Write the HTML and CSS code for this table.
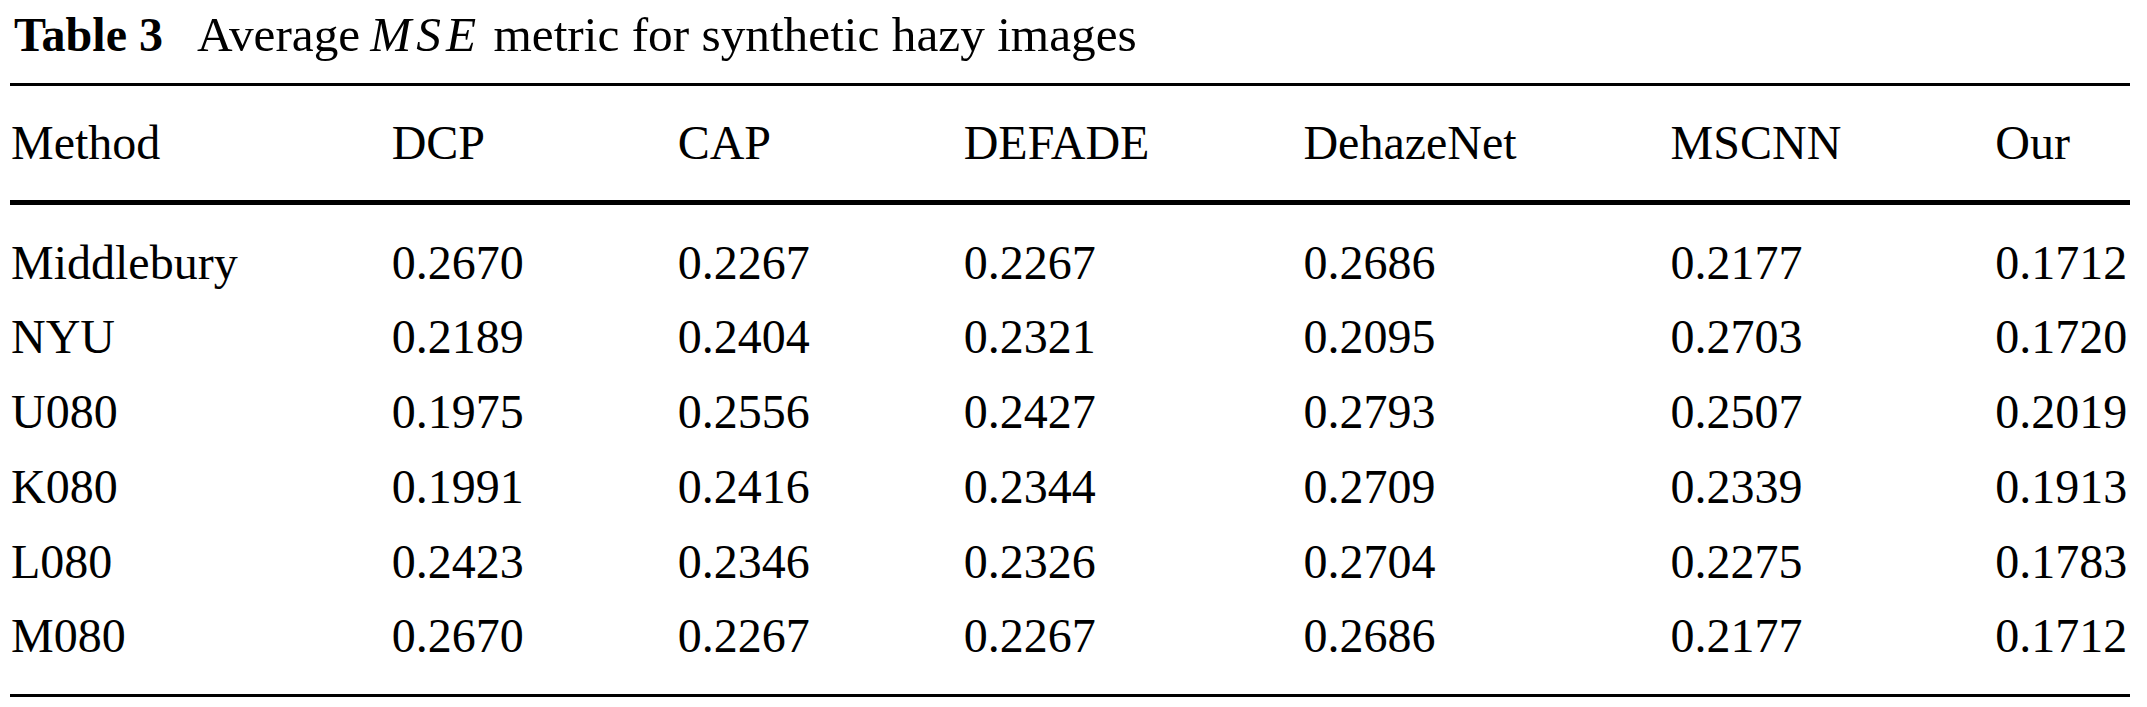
FILE: index.html
```html
<!DOCTYPE html>
<html lang="en">
<head>
<meta charset="utf-8">
<title>Table 3</title>
<link rel="stylesheet" href="styles.css">
</head>
<body>
<div class="page">
  <p class="caption"><b class="label">Table 3</b><span class="text">Average<i class="math">MSE</i> metric for synthetic hazy images</span></p>
  <table class="data">
    <thead>
      <tr><th>Method</th><th>DCP</th><th>CAP</th><th>DEFADE</th><th>DehazeNet</th><th>MSCNN</th><th>Our</th></tr>
    </thead>
    <tbody>
      <tr><td>Middlebury</td><td>0.2670</td><td>0.2267</td><td>0.2267</td><td>0.2686</td><td>0.2177</td><td>0.1712</td></tr>
      <tr><td>NYU</td><td>0.2189</td><td>0.2404</td><td>0.2321</td><td>0.2095</td><td>0.2703</td><td>0.1720</td></tr>
      <tr><td>U080</td><td>0.1975</td><td>0.2556</td><td>0.2427</td><td>0.2793</td><td>0.2507</td><td>0.2019</td></tr>
      <tr><td>K080</td><td>0.1991</td><td>0.2416</td><td>0.2344</td><td>0.2709</td><td>0.2339</td><td>0.1913</td></tr>
      <tr><td>L080</td><td>0.2423</td><td>0.2346</td><td>0.2326</td><td>0.2704</td><td>0.2275</td><td>0.1783</td></tr>
      <tr><td>M080</td><td>0.2670</td><td>0.2267</td><td>0.2267</td><td>0.2686</td><td>0.2177</td><td>0.1712</td></tr>
    </tbody>
  </table>
</div>
</body>
</html>
```
FILE: styles.css
```css
body {
  margin: 0;
  background: #fff;
  color: #000;
  font-family: "Liberation Serif", "Times New Roman", serif;
}

.page {
  padding: 5px 0 0 10px;
}

.caption {
  display: flex;
  align-items: baseline;
  gap: 34px;
  margin: 0 0 18px 4px;
  font-size: 48px;
  line-height: 60px;
  white-space: nowrap;
}

.label {
  font-weight: 700;
}

.text {
  font-size: 49.3px;
}

.math {
  margin-left: 10px;
  font-style: italic;
  letter-spacing: 5px;
}

.data {
  border-collapse: separate;
  border-spacing: 0;
  font-size: 48px;
}

.data th,
.data td {
  padding: 0 154px 0 0;
  line-height: 74.7px;
  text-align: left;
  font-weight: 400;
  white-space: nowrap;
  vertical-align: baseline;
}

.data th:first-child,
.data td:first-child {
  padding-left: 1px;
}

.data th:last-child,
.data td:last-child {
  padding-right: 3px;
}

.data th {
  border-top: 3px solid #000;
  border-bottom: 5px solid #000;
  padding-top: 20px;
  padding-bottom: 18.8px;
}

.data tbody tr:first-child td {
  padding-top: 21.25px;
}

.data tbody tr:last-child td {
  padding-bottom: 20px;
  border-bottom: 3px solid #000;
}
```
